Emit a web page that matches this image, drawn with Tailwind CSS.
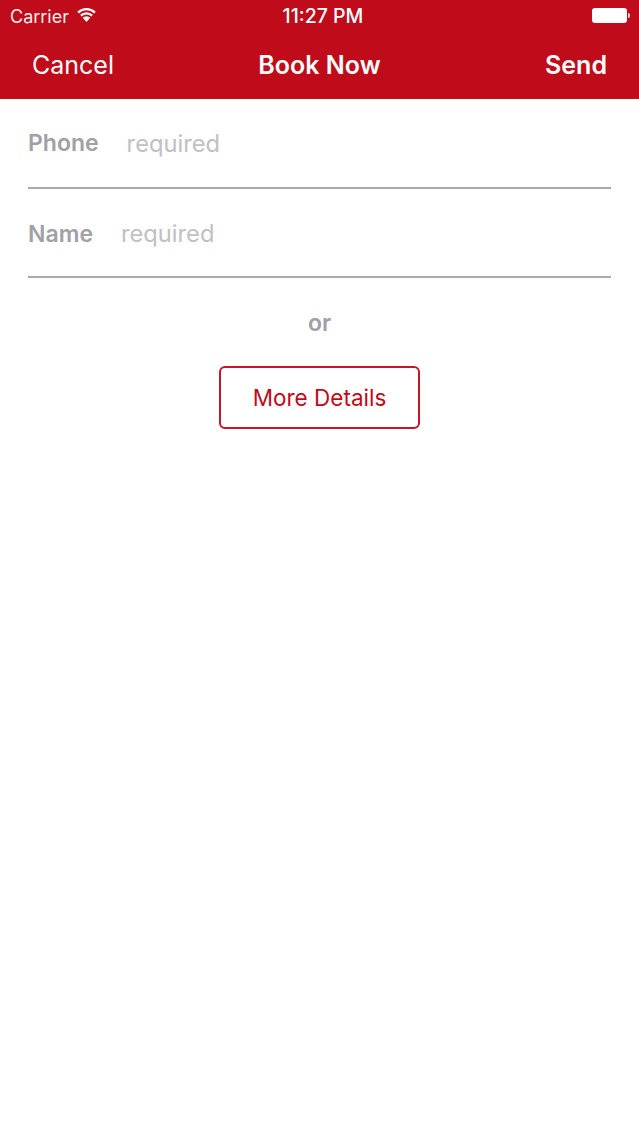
<!DOCTYPE html>
<html lang="en">
<head>
  <meta charset="UTF-8">
  <title>Book Now</title>
  <script src="https://cdn.jsdelivr.net/npm/@tailwindcss/browser@4"></script>
</head>
<body class="bg-white h-screen flex flex-col font-['Inter','Liberation_Sans',sans-serif]">

  <!-- Header -->
  <div class="bg-[#c00b1a] text-white h-[99px] shrink-0 flex flex-col">
    <div class="h-[33px] flex items-center justify-between pl-[10px] pr-[9px] relative">
      <div class="flex items-center gap-[8px] text-[18px] text-white/95">
        <span>Carrier</span>
        <svg width="19" height="14" viewBox="2.4 2.7 14.2 10.8" fill="white" class="-mt-[4px]"><path d="M9.5 13.5 L6.6 10.2 A4.2 4.2 0 0 1 12.4 10.2 Z"/><path d="M4.6 8 A7 7 0 0 1 14.4 8 L13.2 9.3 A5.3 5.3 0 0 0 5.8 9.3 Z"/><path d="M2.4 5.6 A10.2 10.2 0 0 1 16.6 5.6 L15.4 6.9 A8.5 8.5 0 0 0 3.6 6.9 Z"/></svg>
      </div>
      <span class="absolute left-0 right-0 text-center text-[19.5px] font-medium pl-[7px] pt-[1px]">11:27 PM</span>
      <div class="flex items-center -mt-[2px]">
        <div class="w-[35px] h-[15px] bg-white rounded-[3px]"></div>
        <div class="w-[2px] h-[5px] bg-white/80 ml-[1px] rounded-r-sm"></div>
      </div>
    </div>
    <div class="flex-1 flex items-center justify-between pl-[32px] pr-[32px] text-[25px] pb-[1px] relative">
      <span>Cancel</span>
      <span class="absolute left-0 right-0 text-center font-semibold">Book Now</span>
      <span class="font-semibold">Send</span>
    </div>
  </div>

  <!-- Form -->
  <div class="px-[28px]">
    <div class="h-[90px] border-b-2 border-[#a9a9ae] flex items-center gap-[28px] text-[23px] pt-[1px]">
      <span class="font-semibold text-[#a0a0a5]">Phone</span>
      <span class="text-[23.7px] text-[#c0c0c5]">required</span>
    </div>
    <div class="h-[89px] border-b-2 border-[#a9a9ae] flex items-center gap-[28px] text-[23px] pt-[3px]">
      <span class="font-semibold text-[#a0a0a5]">Name</span>
      <span class="text-[23.7px] text-[#c0c0c5]">required</span>
    </div>
  </div>

  <div class="flex flex-col items-center">
    <div class="mt-[31px] text-[23px] font-semibold text-[#a0a0a5] leading-[28px]">or</div>
    <div class="mt-[29px] w-[201px] h-[63px] border-2 border-[#c4162a] rounded-[6px] flex items-center justify-center text-[22.5px] text-[#c00b1a]">More Details</div>
  </div>
</body>
</html>
